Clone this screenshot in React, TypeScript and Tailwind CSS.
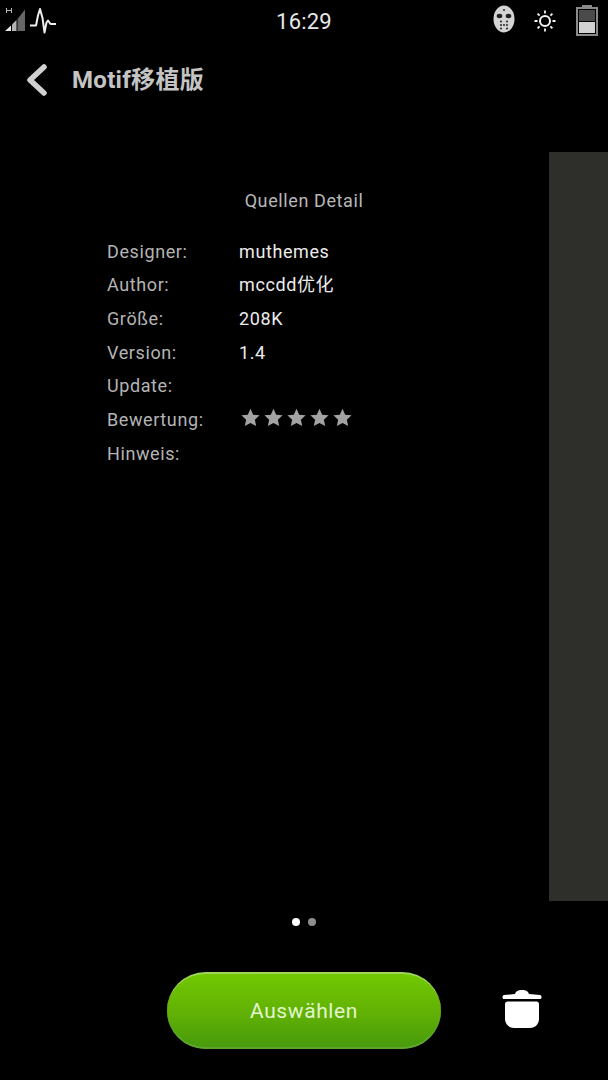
import React from "react";

const rows = [
  { label: "Designer:", value: "muthemes" },
  { label: "Author:", value: "mccdd优化" },
  { label: "Größe:", value: "208K" },
  { label: "Version:", value: "1.4" },
  { label: "Update:", value: "" },
  { label: "Bewertung:", stars: true },
  { label: "Hinweis:", value: "" },
];

const Star = () => (
  <svg width="19" height="19" viewBox="0 0 24 24" fill="#a3a3a3">
    <path d="M12 1l3.400 7.400 8.100.9-6 5.500 1.700 8L12 18.800 4.800 22.800l1.700-8-6-5.500 8.100-.9z" />
  </svg>
);

const StatusLeft = () => (
  <div className="flex-1 flex items-start">
    <svg width="60" height="36" viewBox="0 0 60 36" className="mt-[2px]">
      <path d="M6 8.500h6M6.500 6v5M11.500 6v5" stroke="#bbb" strokeWidth="1" fill="none" />
      <path d="M5 29L11 23.500V29z" fill="#e5e5e5" />
      <path d="M12 29V22.500L16.500 18V29z" fill="#b5b5b5" />
      <path d="M17.500 29V17L25 7.500V29z" fill="#666" />
      <path
        d="M30 23.500h6l2-10 2-6.500 2.500 9 2 14.500 2-10 1.500-2 2.500 3.500h5.500"
        stroke="#eee"
        strokeWidth="2"
        fill="none"
        strokeLinejoin="round"
      />
    </svg>
  </div>
);

const StatusRight = () => (
  <div className="flex-1 flex justify-end items-start">
    <svg width="24" height="30" viewBox="0 0 24 30" className="mt-[5px]">
      <ellipse cx="12" cy="14" rx="10.500" ry="13.500" fill="#d4d4d4" />
      <ellipse cx="7.500" cy="11" rx="2.800" ry="2.200" fill="#222" />
      <ellipse cx="16.500" cy="11" rx="2.800" ry="2.200" fill="#222" />
      <g fill="#333">
        <circle cx="9" cy="16.500" r="1.100" />
        <circle cx="15" cy="16.500" r="1.100" />
        <circle cx="9" cy="20" r="1.100" />
        <circle cx="12" cy="20" r="1.100" />
        <circle cx="15" cy="20" r="1.100" />
        <circle cx="9" cy="23.500" r="1.100" />
        <circle cx="15" cy="23.500" r="1.100" />
        <circle cx="12" cy="5" r="1.100" />
      </g>
    </svg>
    <svg width="24" height="24" viewBox="0 0 24 24" className="ml-[17px] mt-[9px]">
      <circle cx="12" cy="12" r="5" stroke="#f5f5f5" strokeWidth="2" fill="none" />
      <path
        d="M12 1.500v3M12 19.500v3M1.500 12h3M19.500 12h3M4.600 4.600l2 2M17.400 17.400l2 2M4.600 19.400l2-2M17.400 6.600l2-2"
        stroke="#f5f5f5"
        strokeWidth="1.800"
      />
    </svg>
    <svg width="22" height="32" viewBox="0 0 22 32" className="ml-[19px] mr-[10px] mt-[4px]">
      <path d="M6 1h10v3H6z" fill="#8a8a8a" />
      <rect x="1" y="4" width="20" height="27" fill="none" stroke="#8a8a8a" strokeWidth="2" />
      <rect x="3" y="6" width="16" height="11" fill="#4a4a4a" />
      <rect x="3" y="18" width="16" height="11" fill="#d2d2d2" />
    </svg>
  </div>
);

export default function App() {
  return (
    <div
      className="w-[608px] h-[1080px] bg-black flex flex-col overflow-hidden"
      style={{ fontFamily: "Roboto, 'Noto Sans CJK SC', sans-serif" }}
    >
      <div className="h-[44px] flex items-start">
        <StatusLeft />
        <div className="text-[22px] leading-[44px] tracking-[0.2px] text-[#e8e8e8]">16:29</div>
        <StatusRight />
      </div>

      <div className="h-[72px] flex items-center pl-[25px] mb-[36px]">
        <svg width="24" height="34" viewBox="0 0 24 34">
          <path d="M19 4L5 17l14 13" fill="none" stroke="#d0d0d0" strokeWidth="5.500" strokeLinecap="round" strokeLinejoin="round" />
        </svg>
        <h1 className="ml-[23px] text-[24px] font-bold tracking-[0.3px] text-[#c4c4c4]">Motif移植版</h1>
      </div>

      <div className="h-[749px] flex">
        <div className="flex-1">
          <div className="pl-[59px] pt-[35px] text-center text-[18px] leading-[27px] tracking-[0.6px] text-[#b8b8b8]">Quellen Detail</div>
          <div className="mt-[20.500px] pl-[107px] text-[18px] tracking-[0.6px]">
            {rows.map((row) => (
              <div key={row.label} className="h-[33.700px] leading-[33.700px] flex">
                <div className="w-[132px] text-[#b4b4b4]">{row.label}</div>
                {row.stars ? (
                  <div className="flex items-start pl-[2px] mt-[5px] gap-[4px]">
                    <Star />
                    <Star />
                    <Star />
                    <Star />
                    <Star />
                  </div>
                ) : (
                  <div className="text-[#ececec]">{row.value}</div>
                )}
              </div>
            ))}
          </div>
        </div>
        <div className="w-[59px] bg-[#2e2f2a]" />
      </div>

      <div className="h-[71px] flex items-start justify-center gap-[8px] pt-[17px] pr-[1px]">
        <div className="w-[8px] h-[8px] rounded-full bg-white" />
        <div className="w-[8px] h-[8px] rounded-full bg-[#8e8e8e]" />
      </div>

      <div className="flex items-center pl-[167px]">
        <button className="w-[274px] h-[77px] rounded-full bg-gradient-to-b from-[#72c802] via-[#62b204] to-[#469a0c] border-t-2 border-[#9dd65a] text-[21px] tracking-[0.6px] text-[#e3f5cf] shadow-[inset_0_-2px_0_#5ea52f]">
          Auswählen
        </button>
        <svg width="42" height="41" viewBox="0 0 42 41" className="ml-[60px] mt-[-4px]">
          <path d="M14 6c1-3 3-4 7-4s6 1 7 4l11 1c2 .5 2 4 0 4H3c-2 0-2-3.500 0-4z" fill="#fff" />
          <path d="M4 16c0-1.500 1-2.500 2.500-2.500h29c1.500 0 2.500 1 2.500 2.500v15c0 5-4 9-9 9H13c-5 0-9-4-9-9z" fill="#fff" />
        </svg>
      </div>
    </div>
  );
}
